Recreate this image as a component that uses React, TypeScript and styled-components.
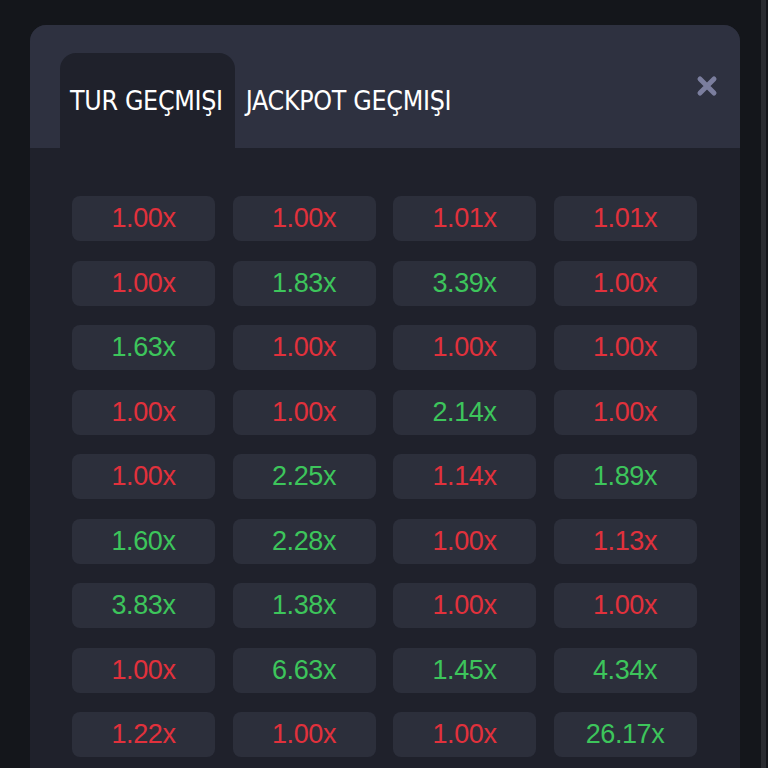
import styled, { createGlobalStyle } from "styled-components";

const rows: string[][] = [
    ["1.00", "1.00", "1.01", "1.01"],
    ["1.00", "1.83", "3.39", "1.00"],
    ["1.63", "1.00", "1.00", "1.00"],
    ["1.00", "1.00", "2.14", "1.00"],
    ["1.00", "2.25", "1.14", "1.89"],
    ["1.60", "2.28", "1.00", "1.13"],
    ["3.83", "1.38", "1.00", "1.00"],
    ["1.00", "6.63", "1.45", "4.34"],
    ["1.22", "1.00", "1.00", "26.17"],
];

// yeşil eşiği: 1.3x üstü
const isWin = (v: string) => parseFloat(v) >= 1.3;

export default function App() {
    return (
        <>
            <GlobalStyle />
            <Page>
                <Modal>
                    <Header>
                        <Tab $active>TUR GEÇMIŞI</Tab>
                        <Tab>JACKPOT GEÇMIŞI</Tab>
                        <CloseButton aria-label="close">
                            <svg width="22" height="22" viewBox="0 0 22 22">
                                <path d="M4 4 L18 18 M18 4 L4 18" stroke="#7b7e9e" strokeWidth="5" strokeLinecap="round" />
                            </svg>
                        </CloseButton>
                    </Header>
                    <Body>
                        <Grid>
                            {rows.flat().map((v, i) => (
                                <Cell key={i} $win={isWin(v)}>
                                    {v}x
                                </Cell>
                            ))}
                        </Grid>
                    </Body>
                </Modal>
                <ScrollRail />
            </Page>
        </>
    );
}

const GlobalStyle = createGlobalStyle`
    html, body {
        margin: 0;
        padding: 0;
        height: 100%;
        overflow: hidden;
        background: #14161b;
    }
    #root {
        height: 100%;
    }
`;

const Page = styled.div`
    display: flex;
    height: 768px;
    padding-top: 25px;
    box-sizing: border-box;
    background: #14161b;
`;

const ScrollRail = styled.div`
    width: 5px;
    margin-left: auto;
    margin-right: 2px;
    margin-top: -25px;
    background: #2a2c31;
`;

const Modal = styled.div`
    margin-left: 30px;
    width: 710px;
    border-radius: 16px 16px 0 0;
    overflow: hidden;
    display: flex;
    flex-direction: column;
    background: #1f212b;
`;

const Header = styled.div`
    display: flex;
    align-items: flex-end;
    height: 123px;
    padding-left: 30px;
    padding-right: 22px;
    background: #2e3140;
`;

const Tab = styled.div<{ $active?: boolean }>`
    height: 95px;
    box-sizing: border-box;
    padding: 0 12px 0 10px;
    display: flex;
    align-items: center;
    border-radius: 16px 16px 0 0;
    background: ${(p) => (p.$active ? "#1f212b" : "transparent")};
    color: #ffffff;
    font-family: "DejaVu Sans Condensed", "DejaVu Sans", sans-serif;
    font-size: 26.5px;
    letter-spacing: -0.3px;
    white-space: nowrap;
    & + & {
        padding-left: 11px;
    }
`;

const CloseButton = styled.div`
    margin-left: auto;
    align-self: flex-start;
    margin-top: 50px;
    display: flex;
`;

const Body = styled.div`
    flex: 1;
    padding: 48px 43px 0 42px;
`;

const Grid = styled.div`
    display: grid;
    grid-template-columns: repeat(4, 143px);
    column-gap: 17.5px;
    row-gap: 19.5px;
`;

const Cell = styled.div<{ $win: boolean }>`
    height: 45px;
    border-radius: 8px;
    background: #2c2f3b;
    display: flex;
    align-items: center;
    justify-content: center;
    font-family: "Liberation Sans", Arial, sans-serif;
    font-size: 27px;
    letter-spacing: -0.4px;
    color: ${(p) => (p.$win ? "#3dc55b" : "#e1313c")};
`;
